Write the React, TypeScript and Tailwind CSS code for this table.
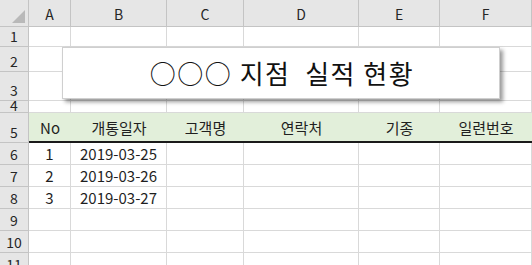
const COLS = ["A", "B", "C", "D", "E", "F"];
const HEADERS = ["No", "개통일자", "고객명", "연락처", "기종", "일련번호"];
const DATA: string[][] = [
  ["1", "2019-03-25", "", "", "", ""],
  ["2", "2019-03-26", "", "", "", ""],
  ["3", "2019-03-27", "", "", "", ""],
  ["", "", "", "", "", ""],
  ["", "", "", "", "", ""],
  ["", "", "", "", "", ""],
];

const font = { fontFamily: '"Noto Sans CJK KR", "Noto Sans", sans-serif' };

// row header: number cell on the left edge
function RowHead({ n, short = false }: { n: number; short?: boolean }) {
  return (
    <div
      className={
        "flex justify-center border-r border-b border-[#c4c4c4] bg-[#e6e6e6] text-[14px] text-[#262626] overflow-visible " +
        (short ? "items-end leading-[13px] pb-0" : "items-end leading-[16px] pb-[2px]")
      }
    >
      {n}
    </div>
  );
}

function Blank() {
  return <div className="border-r border-b border-[#d9d9d9] bg-white" />;
}

export default function App() {
  return (
    <div className="h-[265px] w-[532px] overflow-hidden bg-white" style={font}>
      <div className="relative grid grid-cols-[29px_42px_96px_77px_115px_81px_1fr] grid-rows-[27px_20px_25px_29px_12px_30px_22px_22px_22px_22px_22px_22px]">
        {/* corner cell */}
        <div className="relative border-r border-b border-[#c4c4c4] bg-[#e6e6e6]">
          <svg width="14" height="14" viewBox="0 0 14 14" className="absolute left-[12px] top-[10px]">
            <path d="M13 0 L13 13 L0 13 Z" fill="#b9b9b9" />
          </svg>
        </div>
        {COLS.map((c) => (
          <div
            key={c}
            className="flex items-center justify-center border-r border-b border-[#c4c4c4] bg-[#e6e6e6] pt-[2px] text-[14px] text-[#262626]"
          >
            {c}
          </div>
        ))}

        {/* rows 1-4 */}
        {[1, 2, 3, 4].map((r) => (
          <div key={r} className="contents">
            <RowHead n={r} short={r === 4} />
            {COLS.map((c) => (
              <Blank key={c} />
            ))}
          </div>
        ))}

        {/* table header */}
        <RowHead n={5} />
        {HEADERS.map((h) => (
          <div
            key={h}
            className="flex items-end justify-center border-b-2 border-[#1a1a1a] bg-[#e2efda] pb-[4px] text-[15px] leading-[18px] text-[#1f1f1f]"
          >
            {h}
          </div>
        ))}

        {/* data rows */}
        {DATA.map((row, i) => (
          <div key={i} className="contents">
            <RowHead n={i + 6} />
            {row.map((v, j) => (
              <div
                key={j}
                className="flex items-end justify-center border-r border-b border-[#d9d9d9] pb-[1px] text-[15px] leading-[18px] text-[#1f1f1f]"
              >
                {v}
              </div>
            ))}
          </div>
        ))}

        {/* title text box */}
        <div className="absolute left-[62px] top-[47px] flex h-[52px] w-[438px] items-center justify-center border border-[#cfcfcf] bg-white shadow-[3px_3px_4px_rgba(0,0,0,0.4)]">
          <span className="whitespace-pre pl-[2px] text-[26px] leading-none tracking-[1.5px] text-[#111]">○○○ 지점  실적 현황</span>
        </div>
      </div>
    </div>
  );
}
